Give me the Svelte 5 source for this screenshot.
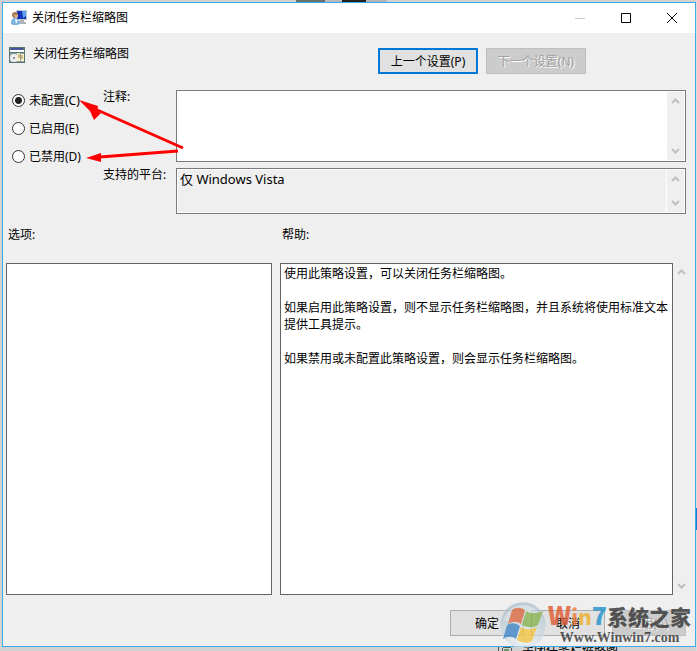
<script>
	let state = 'C';
	let comment = '';
	const title = '关闭任务栏缩略图';
	const states = [
		{ key: 'C', label: '未配置(C)' },
		{ key: 'E', label: '已启用(E)' },
		{ key: 'D', label: '已禁用(D)' }
	];
	const help = [
		'使用此策略设置，可以关闭任务栏缩略图。',
		'如果启用此策略设置，则不显示任务栏缩略图，并且系统将使用标准文本提供工具提示。',
		'如果禁用或未配置此策略设置，则会显示任务栏缩略图。'
	];
</script>

{#snippet scrollbar()}
	<div class="scrollbar" aria-hidden="true">
		<svg width="9" height="6" viewBox="0 0 9 6"><path d="M1 5 4.500 1.500 8 5" /></svg>
		<svg width="9" height="6" viewBox="0 0 9 6"><path d="M1 1 4.500 4.500 8 1" /></svg>
	</div>
{/snippet}

<div class="desktop">
	<main class="dialog">
		<header>
			<svg width="16" height="16" viewBox="0 0 16 16">
				<path d="M5 0h11v10H5z" fill="#c3c7ce" />
				<path d="M6 1h9v8H6z" fill="#1231b8" />
				<path d="M11 1h4v5l-3 2z" fill="#5fa2f4" />
				<path d="M9 10h4v2h2v2H8v-2h1z" fill="#aeb3b5" />
				<path d="M0 14c0-4 1-6 4-6s5 2 5 6l-3 1H2z" fill="#7eb3df" />
				<path d="m4 9 1 5 2-4z" fill="#fff" />
				<circle cx="4" cy="5" r="3" fill="#a87a50" />
				<path d="M3 5h4c0 4-3 4-4 0z" fill="#ddb28c" />
			</svg>
			<span class="title">{title}</span>
			<button class="caption" aria-label="最小化" disabled>
				<svg width="11" height="11"><path d="M0 5.500h10" stroke="#ccc" /></svg>
			</button>
			<button class="caption" aria-label="最大化">
				<svg width="11" height="11"><path d="M.5.5h9v9h-9z" fill="none" stroke="#000" /></svg>
			</button>
			<button class="caption" aria-label="关闭">
				<svg width="11" height="11"><path d="m0 0 10 10M10 0 0 10" stroke="#000" /></svg>
			</button>
		</header>

		<form>
			<div class="setting">
				<svg width="16" height="16" viewBox="0 0 16 16">
					<path d="M0 0h16v16H0z" fill="#567474" />
					<path d="M1 3h14v2H1z" fill="#fff" />
					<path d="M2 1h12v2H2z" fill="#47549b" />
					<path d="M1 6h14v9H1z" fill="#8fa39a" />
					<circle cx="5" cy="11" r="4" fill="#f0edf0" />
					<circle cx="5" cy="11" r="1" fill="#63806c" />
					<path d="M8 6h3v8H8zM12 7h3v7h-3z" fill="#fff2c4" />
					<path d="M9 8h2M9 10h2M12 9h2M12 11h2" stroke="#9c7848" />
				</svg>
				<h1>{title}</h1>
				<button type="button" class="nav focused">上一个设置(P)</button>
				<button type="button" class="nav" disabled>下一个设置(N)</button>
			</div>

			<div class="config">
				<div class="states">
					{#each states as item}
						<label><input type="radio" name="state" value={item.key} bind:group={state} />{item.label}</label>
					{/each}
				</div>
				<label class="name" for="comment">注释:</label>
				<div class="field">
					<textarea id="comment" bind:value={comment}></textarea>
					{@render scrollbar()}
				</div>
				<label class="name" for="platform">支持的平台:</label>
				<div class="field readonly">
					<textarea id="platform" readonly value="仅 Windows Vista"></textarea>
					{@render scrollbar()}
				</div>
			</div>

			<div class="panels">
				<section class="options">
					<h2>选项:</h2>
					<div class="box"></div>
				</section>
				<section class="help">
					<h2>帮助:</h2>
					<div class="row">
						<div class="box">
							{#each help as text}
								<p>{text}</p>
							{/each}
						</div>
						{@render scrollbar()}
					</div>
				</section>
			</div>

			<footer>
				<button type="button">确定</button>
				<button type="button">取消</button>
				<button type="button" disabled>应用(A)</button>
			</footer>
		</form>
	</main>
	<div class="behind">
		<svg width="18" height="4"><path d="M0 0h1v4H0zM5 0h8v1H5zM4 1h1v3H4zM13 1h1v3h-1z" fill="#555" /><path d="M6 2h5v2H6z" fill="#6a9a6a" /></svg>
		<span>{title}</span>
	</div>

	<svg class="arrows" width="190" height="170" viewBox="0 0 190 170">
		<path d="M183 148 95 109M178 151 100 157" />
		<polygon points="79,100 98,106 97,111 101,113 94,120 90,111" />
		<polygon points="86,158 101,153 101,162" />
	</svg>

	<div class="watermark">
		<svg width="48" height="48" viewBox="0 0 48 48">
			<defs>
				<radialGradient id="orb" cx="50%" cy="80%" r="80%">
					<stop offset="0" stop-color="#eef8fc" />
					<stop offset=".6" stop-color="#c3d3dd" />
					<stop offset="1" stop-color="#9bb2c4" />
				</radialGradient>
			</defs>
			<circle cx="24" cy="24" r="23" fill="url(#orb)" stroke="#dbe3e8" opacity=".8" />
			<path d="M5 19C9-1 39-1 43 19c-12-5-26 5-38 0z" fill="#fff" opacity=".35" />
			<path d="M13 9c4-3 8-3 13 0l-4 14c-4-3-8-3-13 0z" fill="#dc6a42" />
			<path d="M27 10c5 3 10 3 17 0l-5 14c-5 3-10 3-16 0z" fill="#86b24f" />
			<path d="M8 24c5-3 9-2 13 1l-4 13c-4-3-8-3-13 0z" fill="#4287c8" />
			<path d="M22 26c5 3 10 3 16 0l-5 14c-4 3-10 2-15-1z" fill="#f1c440" />
		</svg>
		<div class="brand">
			<div class="name-line">
				<b class="w">W</b><b class="i">i</b><b class="n">n</b><b class="seven">7</b><b class="cn">系统之家</b>
			</div>
			<div class="url">Www.Winwin7.com</div>
		</div>
	</div>
</div>

<style>
	:global(body) {
		margin: 0;
	}
	.desktop {
		position: relative;
		display: flex;
		flex-direction: column;
		box-sizing: border-box;
		min-height: 100vh;
		padding: 2px 1px 0 2px;
		overflow: hidden;
		/* slivers of the window that lies behind the dialog */
		background:
			linear-gradient(90deg, transparent 296px, #66706c 296px 325px, #b9b9c4 325px 342px, #222 342px 366px, #b5b5bd 366px 387px, transparent 387px) 0 0 / 100% 2px no-repeat,
			linear-gradient(#ddd 508px, #1979d4 508px 530px, #ddd 530px) 100% 0 / 1px 100% no-repeat,
			#d2d2d2;
		color: #000;
		font: 12px/17px "Noto Sans", "Noto Sans CJK SC", sans-serif;
	}
	.dialog {
		flex: 1;
		display: flex;
		flex-direction: column;
		border: 1px solid #3da9e8;
		background: #efefef;
	}
	svg {
		flex: none;
		display: block;
	}
	header {
		display: flex;
		align-items: center;
		height: 30px;
		padding-left: 8px;
		background: #fff;
	}
	.title {
		flex: 1;
		height: 18px;
		margin-left: 5px;
	}
	button {
		box-sizing: border-box;
		width: 74px;
		height: 26px;
		padding: 0;
		border: 1px solid #adadad;
		background: #e1e1e1;
		color: #000;
		font: inherit;
	}
	button:disabled {
		border-color: #bfbfbf;
		background: #ccc;
		color: #a0a0a0;
		text-shadow: 1px 1px #fff;
	}
	button.caption {
		display: flex;
		align-items: center;
		justify-content: center;
		width: 46px;
		height: 30px;
		border: 0;
		background: none;
	}
	form {
		flex: 1;
		display: flex;
		flex-direction: column;
		padding: 15px 9px 10px 3px;
	}
	.setting {
		display: flex;
		gap: 8px;
		padding: 0 100px 0 3px;
	}
	.setting svg {
		margin-top: -1px;
	}
	h1,
	h2 {
		margin: 0;
		font: inherit;
	}
	h1 {
		flex: 1;
		height: 17px;
		line-height: 12px;
	}
	button.nav {
		width: 100px;
	}
	.focused {
		border: 2px solid #0078d7;
	}
	.config {
		display: grid;
		grid-template-columns: 94px 76px 1fr;
		grid-template-rows: 72px 46px;
		gap: 6px 0;
		margin-top: 16px;
	}
	.states {
		grid-row: span 2;
		display: flex;
		flex-direction: column;
		gap: 8px;
		padding-left: 6px;
	}
	.states label {
		display: flex;
		align-items: center;
		gap: 4px;
		height: 20px;
		white-space: nowrap;
	}
	input {
		appearance: none;
		box-sizing: border-box;
		width: 13px;
		height: 13px;
		margin: 0;
		border: 1px solid #333;
		border-radius: 50%;
		background: #fff;
	}
	input:checked {
		background: radial-gradient(circle, #222 3px, #fff 4px);
	}
	.name {
		padding-left: 3px;
		line-height: 14px;
		white-space: nowrap;
	}
	.field {
		display: flex;
		padding: 1px;
		border: 1px solid #7a7a7a;
		background: #fff;
	}
	textarea {
		flex: 1;
		min-width: 0;
		height: 100%;
		box-sizing: border-box;
		margin: 0;
		padding: 1px 2px;
		border: 0;
		outline: none;
		resize: none;
		overflow: hidden;
		background: transparent;
		color: inherit;
		font: inherit;
		font-size: 13px;
	}
	.readonly textarea {
		background: #efefef;
		margin-right: 1px;
	}
	.scrollbar {
		flex: none;
		display: flex;
		flex-direction: column;
		justify-content: space-between;
		align-items: center;
		box-sizing: border-box;
		width: 17px;
		padding: 6px 0;
		background: #efefef;
	}
	.scrollbar path {
		fill: none;
		stroke: #bfbfbf;
		stroke-width: 2;
	}
	.panels {
		flex: 1;
		display: flex;
		gap: 8px;
		margin: 12px -4px 0 0;
	}
	section {
		display: flex;
		flex-direction: column;
		gap: 20px;
	}
	h2 {
		height: 17px;
		padding-left: 2px;
	}
	.options {
		flex: 266;
	}
	.help {
		flex: 410;
	}
	.row {
		flex: 1;
		display: flex;
	}
	.box {
		flex: 1;
		box-sizing: border-box;
		min-height: 300px;
		padding: 1px 3px;
		border: 1px solid #646464;
		background: #fff;
	}
	p {
		margin: 0 0 17px;
	}
	footer {
		display: flex;
		justify-content: flex-end;
		gap: 7px;
		margin-top: 15px;
	}
	.behind {
		display: flex;
		gap: 6px;
		height: 4px;
		padding-left: 496px;
		overflow: hidden;
		line-height: 8px;
		white-space: nowrap;
	}
	.arrows {
		position: absolute;
		left: 0;
		top: 0;
		pointer-events: none;
		fill: #f00;
	}
	.arrows path {
		stroke: #f00;
		stroke-width: 3;
	}
	.watermark {
		position: absolute;
		right: 6px;
		bottom: 2px;
		display: flex;
		gap: 1px;
		pointer-events: none;
		opacity: 0.8;
	}
	.brand {
		display: flex;
		flex-direction: column;
		color: #333;
	}
	.name-line {
		display: flex;
		align-items: baseline;
		height: 29px;
		font: 900 21px/27px "Noto Sans CJK SC", sans-serif;
	}
	.w {
		color: #e05a30;
		font-size: 25px;
	}
	.i {
		color: #ee7c3c;
	}
	.n {
		color: #ecb02c;
	}
	.seven {
		color: #1e90cc;
		font-size: 25px;
	}
	.url {
		padding-left: 12px;
		font: bold 14px/16px "Liberation Serif", serif;
	}
</style>
